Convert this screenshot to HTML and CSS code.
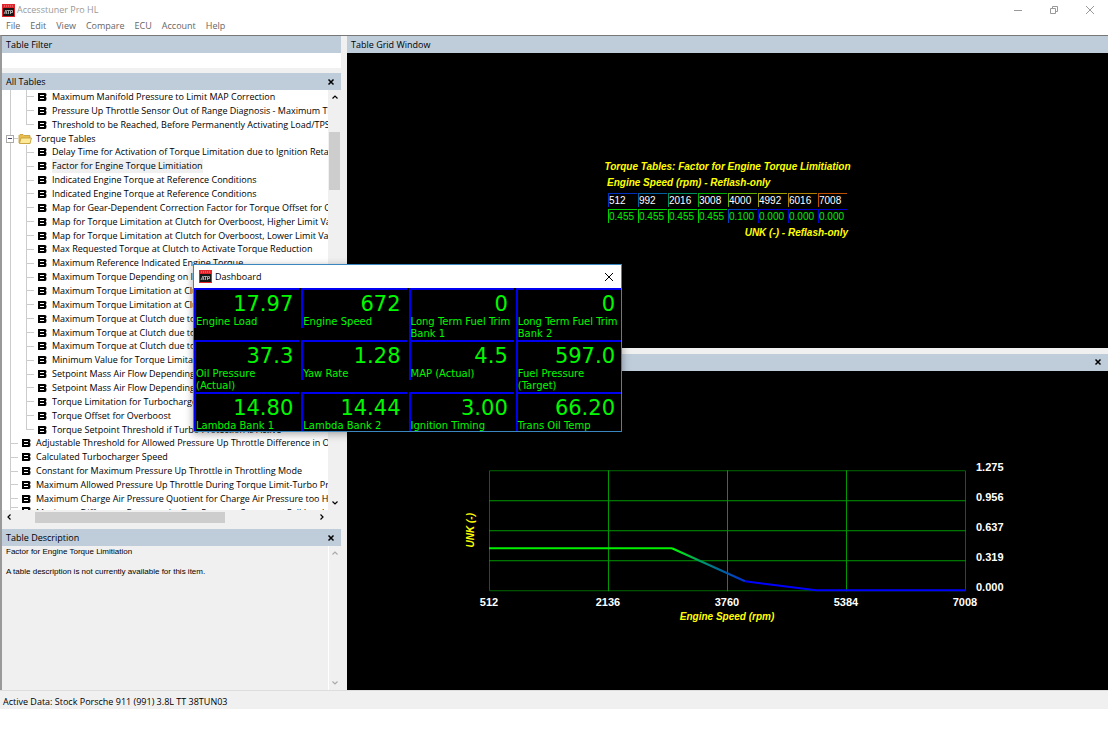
FILE: index.html
```html
<!DOCTYPE html>
<html lang="en">
<head>
  <meta charset="utf-8">
  <meta name="viewport" content="width=device-width, initial-scale=1.0">
  <title>Accesstuner Pro HL</title>
  <link rel="stylesheet" href="styles.css">
</head>
<body>
  <!-- shared icons -->
  <svg class="sprite" width="0" height="0">
    <symbol id="atp" viewBox="0 0 13 13">
      <rect width="13" height="13" fill="#e0262c"/>
      <rect x="1" y="4" width="11" height="8" fill="#161616"/>
      <path d="M2 2h1M4 2h1M6 2h1M8 2h1M10 2h1" stroke="#f28b8b"/>
      <path d="M2 10l2-4 1 4M3 9h2M5 6.500h3M6.500 6.500V10M8.500 10V6.500h2v2h-2" fill="none" stroke="#ccc" stroke-width=".8"/>
    </symbol>
    <symbol id="leaf" viewBox="0 0 10 10">
      <path d="M1 1h7q1.500 0 1.500 1.500 0 1.500-.8 2 .8.500.8 2Q9.500 9 8 9H1z" fill="#000"/>
      <path d="M3 3.500h4M3 6.500h4" stroke="#fff"/>
    </symbol>
    <symbol id="folder" viewBox="0 0 14 12">
      <path d="M1 10V2.500L2 1.500h3l1 1h6v8z" fill="#e9bd4d" stroke="#c29a35" stroke-width=".8"/>
      <path d="M1.500 10.500L3 5h10.500L12 10.500z" fill="#fde998" stroke="#c29a35" stroke-width=".8"/>
    </symbol>
    <symbol id="cross" viewBox="0 0 8 8">
      <path d="M1.500 1.500l5 5M6.500 1.500l-5 5" fill="none" stroke="currentColor" stroke-width="1.500"/>
    </symbol>
    <symbol id="thin-cross" viewBox="0 0 10 10">
      <path d="M1 1l8 8M9 1L1 9" fill="none" stroke="currentColor"/>
    </symbol>
    <symbol id="chevron" viewBox="0 0 8 8">
      <path d="M1.500 5.500L4 3l2.500 2.500" fill="none" stroke="currentColor" stroke-width="1.200"/>
    </symbol>
  </svg>

  <div class="app">
    <header class="titlebar">
      <svg class="logo"><use href="#atp"/></svg>
      <span class="title">Accesstuner Pro HL</span>
      <button class="win-btn" aria-label="Minimize"><svg viewBox="0 0 10 10"><path d="M1 5.500h8" stroke="currentColor"/></svg></button>
      <button class="win-btn" aria-label="Restore"><svg viewBox="0 0 10 10"><path d="M1.500 3.500h5v5h-5zM3.500 3V1.500h5v5H7" fill="none" stroke="currentColor"/></svg></button>
      <button class="win-btn" aria-label="Close"><svg><use href="#thin-cross"/></svg></button>
    </header>

    <nav class="menu">
      <button>File</button>
      <button>Edit</button>
      <button>View</button>
      <button>Compare</button>
      <button>ECU</button>
      <button>Account</button>
      <button>Help</button>
    </nav>

    <main class="workspace">
      <div class="sidebar">
        <section class="filter">
          <label class="panel-head" for="filter">Table Filter</label>
          <input class="filter-input" id="filter" type="text">
        </section>

        <section class="tables">
          <div class="panel-head">
            <span>All Tables</span>
            <button class="panel-close" aria-label="Close tables"><svg><use href="#cross"/></svg></button>
          </div>
          <div class="tree-box">
            <ul class="tree">
              <li class="child"><svg><use href="#leaf"/></svg><span>Maximum Manifold Pressure to Limit MAP Correction</span></li>
              <li class="child"><svg><use href="#leaf"/></svg><span>Pressure Up Throttle Sensor Out of Range Diagnosis - Maximum Threshold</span></li>
              <li class="child last"><svg><use href="#leaf"/></svg><span>Threshold to be Reached, Before Permanently Activating Load/TPS Plausibility</span></li>
              <li class="group"><button class="toggle" aria-label="Collapse Torque Tables"></button><svg class="folder"><use href="#folder"/></svg><span>Torque Tables</span></li>
              <li class="child"><svg><use href="#leaf"/></svg><span>Delay Time for Activation of Torque Limitation due to Ignition Retard</span></li>
              <li class="child selected"><svg><use href="#leaf"/></svg><span>Factor for Engine Torque Limitiation</span></li>
              <li class="child"><svg><use href="#leaf"/></svg><span>Indicated Engine Torque at Reference Conditions</span></li>
              <li class="child"><svg><use href="#leaf"/></svg><span>Indicated Engine Torque at Reference Conditions</span></li>
              <li class="child"><svg><use href="#leaf"/></svg><span>Map for Gear-Dependent Correction Factor for Torque Offset for Overboost</span></li>
              <li class="child"><svg><use href="#leaf"/></svg><span>Map for Torque Limitation at Clutch for Overboost, Higher Limit Value</span></li>
              <li class="child"><svg><use href="#leaf"/></svg><span>Map for Torque Limitation at Clutch for Overboost, Lower Limit Value</span></li>
              <li class="child"><svg><use href="#leaf"/></svg><span>Max Requested Torque at Clutch to Activate Torque Reduction</span></li>
              <li class="child"><svg><use href="#leaf"/></svg><span>Maximum Reference Indicated Engine Torque</span></li>
              <li class="child"><svg><use href="#leaf"/></svg><span>Maximum Torque Depending on Intake</span></li>
              <li class="child"><svg><use href="#leaf"/></svg><span>Maximum Torque Limitation at Clutch</span></li>
              <li class="child"><svg><use href="#leaf"/></svg><span>Maximum Torque Limitation at Clutch</span></li>
              <li class="child"><svg><use href="#leaf"/></svg><span>Maximum Torque at Clutch due to</span></li>
              <li class="child"><svg><use href="#leaf"/></svg><span>Maximum Torque at Clutch due to</span></li>
              <li class="child"><svg><use href="#leaf"/></svg><span>Maximum Torque at Clutch due to</span></li>
              <li class="child"><svg><use href="#leaf"/></svg><span>Minimum Value for Torque Limitation</span></li>
              <li class="child"><svg><use href="#leaf"/></svg><span>Setpoint Mass Air Flow Depending on</span></li>
              <li class="child"><svg><use href="#leaf"/></svg><span>Setpoint Mass Air Flow Depending on</span></li>
              <li class="child"><svg><use href="#leaf"/></svg><span>Torque Limitation for Turbocharger</span></li>
              <li class="child"><svg><use href="#leaf"/></svg><span>Torque Offset for Overboost</span></li>
              <li class="child last"><svg><use href="#leaf"/></svg><span>Torque Setpoint Threshold if Turbo Protection is Active</span></li>
              <li><svg><use href="#leaf"/></svg><span>Adjustable Threshold for Allowed Pressure Up Throttle Difference in Overboost</span></li>
              <li><svg><use href="#leaf"/></svg><span>Calculated Turbocharger Speed</span></li>
              <li><svg><use href="#leaf"/></svg><span>Constant for Maximum Pressure Up Throttle in Throttling Mode</span></li>
              <li><svg><use href="#leaf"/></svg><span>Maximum Allowed Pressure Up Throttle During Torque Limit-Turbo Protection</span></li>
              <li><svg><use href="#leaf"/></svg><span>Maximum Charge Air Pressure Quotient for Charge Air Pressure too High</span></li>
              <li class="cut"><svg><use href="#leaf"/></svg><span>Maximum Difference Between the Two Pressure Sensors at Full Load, MAP</span></li>
            </ul>
            <div class="vbar">
              <svg><use href="#chevron"/></svg>
              <div class="vthumb"></div>
              <svg class="down"><use href="#chevron"/></svg>
            </div>
          </div>
          <div class="hbar">
            <svg class="left"><use href="#chevron"/></svg>
            <div class="hthumb"></div>
            <svg class="right"><use href="#chevron"/></svg>
          </div>
        </section>

        <section class="description">
          <div class="panel-head">
            <span>Table Description</span>
            <button class="panel-close" aria-label="Close description"><svg><use href="#cross"/></svg></button>
          </div>
          <div class="description-box">
            <div class="description-text">
              <p>Factor for Engine Torque Limitiation</p>
              <p>A table description is not currently available for this item.</p>
            </div>
            <div class="vbar muted">
              <svg><use href="#chevron"/></svg>
              <svg class="down"><use href="#chevron"/></svg>
            </div>
          </div>
        </section>
      </div>

      <div class="content">
        <section class="grid-window">
          <div class="panel-head">Table Grid Window</div>
          <div class="grid-view">
            <h2>Torque Tables: Factor for Engine Torque Limitiation</h2>
            <div class="grid-body">
              <p class="axis-x">Engine Speed (rpm) - Reflash-only</p>
              <table class="cells">
                <tr>
                  <th class="c1">512</th><th class="c2">992</th><th class="c3">2016</th><th class="c4">3008</th><th class="c5">4000</th><th class="c6">4992</th><th class="c7">6016</th><th class="c8">7008</th>
                </tr>
                <tr>
                  <td class="high">0.455</td><td class="high">0.455</td><td class="high">0.455</td><td class="high">0.455</td><td class="low">0.100</td><td class="zero">0.000</td><td class="zero">0.000</td><td class="zero">0.000</td>
                </tr>
              </table>
              <p class="axis-z">UNK (-) - Reflash-only</p>
            </div>
          </div>
        </section>

        <section class="graph-window">
          <div class="panel-head">
            <span></span>
            <button class="panel-close" aria-label="Close graph"><svg><use href="#cross"/></svg></button>
          </div>
          <svg class="graph" viewBox="0 0 761 319">
            <defs>
              <linearGradient id="fall" gradientUnits="userSpaceOnUse" x1="325" y1="0" x2="398" y2="0">
                <stop offset="0" stop-color="#00ff00"/>
                <stop offset=".5" stop-color="#008080"/>
                <stop offset="1" stop-color="#0030d8"/>
              </linearGradient>
            </defs>
            <path class="frame" d="M142.500 99.500H618.500V219.500H142.500Z"/>
            <path class="lines" d="M261.500 99V220M380.500 99V220M499.500 99V220M142 129.500H619M142 159.500H619M142 189.500H619"/>
            <path class="curve" stroke="#00f000" d="M142 177H325"/>
            <path class="curve" stroke="url(#fall)" d="M325 177L398 210"/>
            <path class="curve" stroke="#0000ff" d="M398 210L469 219H619"/>
            <g class="ticks">
              <text x="142" y="235">512</text>
              <text x="261" y="235">2136</text>
              <text x="380" y="235">3760</text>
              <text x="499" y="235">5384</text>
              <text x="618" y="235">7008</text>
              <text x="629" y="100">1.275</text>
              <text x="629" y="130">0.956</text>
              <text x="629" y="160">0.637</text>
              <text x="629" y="190">0.319</text>
              <text x="629" y="220">0.000</text>
            </g>
            <text class="axis" x="380" y="249">Engine Speed (rpm)</text>
            <text class="axis" transform="translate(127 159) rotate(-90)">UNK (-)</text>
          </svg>
        </section>
      </div>
    </main>

    <footer class="status">Active Data: Stock Porsche 911 (991) 3.8L TT 38TUN03</footer>
  </div>

  <!-- floating gauge window -->
  <div class="dashboard">
    <div class="dash-head">
      <svg class="logo"><use href="#atp"/></svg>
      <span>Dashboard</span>
      <button class="dash-close" aria-label="Close dashboard"><svg><use href="#thin-cross"/></svg></button>
    </div>
    <div class="gauges">
      <div class="gauge"><b>17.97</b><span>Engine Load</span></div>
      <div class="gauge"><b>672</b><span>Engine Speed</span></div>
      <div class="gauge"><b>0</b><span>Long Term Fuel Trim Bank 1</span></div>
      <div class="gauge"><b>0</b><span>Long Term Fuel Trim Bank 2</span></div>
      <div class="gauge"><b>37.3</b><span>Oil Pressure<br>(Actual)</span></div>
      <div class="gauge"><b>1.28</b><span>Yaw Rate</span></div>
      <div class="gauge"><b>4.5</b><span>MAP (Actual)</span></div>
      <div class="gauge"><b>597.0</b><span>Fuel Pressure<br>(Target)</span></div>
      <div class="gauge"><b>14.80</b><span>Lambda Bank 1</span></div>
      <div class="gauge"><b>14.44</b><span>Lambda Bank 2</span></div>
      <div class="gauge"><b>3.00</b><span>Ignition Timing</span></div>
      <div class="gauge"><b>66.20</b><span>Trans Oil Temp</span></div>
    </div>
  </div>
</body>
</html>
```
FILE: styles.css
```css
* {
  box-sizing: border-box;
}

body {
  margin: 0;
  background: #fff;
  color: #000;
  font-family: "Open Sans", "Noto Sans", sans-serif;
  font-size: 9px;
  line-height: 14px;
}

button {
  padding: 0;
  border: none;
  background: none;
  color: inherit;
  font: inherit;
}

p, h2, ul {
  margin: 0;
  padding: 0;
}

svg {
  display: block;
  flex: none;
}

.sprite {
  position: absolute;
}

.app {
  display: flex;
  flex-direction: column;
  height: calc(100vh - 21px);
  margin-right: 2px;
}

.logo {
  width: 13px;
  height: 13px;
}

/* Title bar and menu */
.titlebar {
  display: flex;
  align-items: center;
  height: 20px;
  padding: 0 13px 0 2px;
  color: #999;
}

.title {
  flex: 1;
  padding-left: 2px;
}

.win-btn {
  margin-left: 26px;
}

.win-btn svg {
  width: 10px;
  height: 10px;
}

.menu {
  display: flex;
  align-items: flex-start;
  gap: 10px;
  height: 15px;
  padding: 0 6px;
  color: #666;
  line-height: 12px;
}

/* Main area */
.workspace {
  flex: 1;
  display: flex;
  gap: 6px;
  min-height: 0;
  border-top: 1px solid #777;
  border-left: 2px solid #999;
  background: #f0f0f0;
}

.sidebar {
  display: flex;
  flex-direction: column;
  gap: 5px;
  width: 339px;
}

.content {
  flex: 1;
  display: flex;
  flex-direction: column;
  gap: 6px;
  min-width: 0;
}

.panel-head {
  display: flex;
  flex: none;
  align-items: center;
  justify-content: space-between;
  height: 17px;
  padding: 0 6px 0 4px;
  background: #bfcddb;
}

.panel-close svg {
  width: 8px;
  height: 8px;
}

.filter-input {
  display: block;
  width: 100%;
  height: 15px;
  padding: 0 3px;
  border: none;
  font: inherit;
}

/* Table tree */
.tables {
  flex: 1;
  display: flex;
  flex-direction: column;
  min-height: 0;
}

.tree-box {
  flex: 1;
  display: flex;
  min-height: 0;
  background: #fff;
}

.tree {
  flex: 1;
  display: flex;
  flex-direction: column;
  min-width: 0;
  overflow: hidden;
  list-style: none;
  background: linear-gradient(#ccc, #ccc) 8px 0 / 1px 100% no-repeat;
}

.tree li {
  flex: 1 0 0;
  display: flex;
  align-items: center;
  gap: 5px;
  min-height: 0;
  padding-left: 19px;
  white-space: nowrap;
  background: linear-gradient(#ccc, #ccc) 8px 50% / 8px 1px no-repeat;
}

.tree li.child {
  padding-left: 35px;
  background:
    linear-gradient(#ccc, #ccc) 24px 0 / 1px 100% no-repeat,
    linear-gradient(#ccc, #ccc) 24px 50% / 8px 1px no-repeat;
}

.tree li.last {
  background:
    linear-gradient(#ccc, #ccc) 24px 0 / 1px 50% no-repeat,
    linear-gradient(#ccc, #ccc) 24px 50% / 8px 1px no-repeat;
}

.tree li.group {
  gap: 4px;
  padding-left: 4px;
}

.tree li.cut {
  flex: 0 0 4px;
  align-items: flex-start;
  overflow: hidden;
}

.tree svg {
  width: 10px;
  height: 10px;
}

.tree svg.folder {
  width: 14px;
  height: 12px;
}

.selected span {
  background: #f0f0f0;
}

.toggle {
  width: 8px;
  height: 8px;
  border: 1px solid #aaa;
  background: linear-gradient(#446, #446) 50% 50% / 4px 1px no-repeat #fff;
}

/* Scroll bars */
.vbar {
  display: flex;
  flex-direction: column;
  align-items: center;
  width: 13px;
  padding: 3px 0;
  background: #f0f0f0;
}

.vbar svg,
.hbar svg {
  width: 8px;
  height: 8px;
}

.vthumb {
  width: 11px;
  height: 58px;
  margin-top: 31px;
  background: #cdcdcd;
}

.down {
  margin-top: auto;
  transform: rotate(180deg);
}

.muted {
  border-left: 1px solid #fff;
  color: #aaa;
}

.hbar {
  display: flex;
  align-items: center;
  height: 14px;
  padding: 0 15px 0 3px;
}

.hthumb {
  width: 190px;
  height: 11px;
  margin-left: 22px;
  background: #cdcdcd;
}

.left {
  transform: rotate(-90deg);
}

.right {
  margin-left: auto;
  transform: rotate(90deg);
}

/* Description */
.description-box {
  display: flex;
  height: 144px;
}

.description-text {
  flex: 1;
  padding-left: 4px;
  font-family: "Liberation Sans", Arial, sans-serif;
  font-size: 8px;
  line-height: 12px;
}

.description-text p + p {
  margin-top: 8px;
}

/* Table grid */
.grid-window {
  flex: 312;
  display: flex;
  flex-direction: column;
}

.grid-view {
  flex: 1;
  display: flex;
  flex-direction: column;
  align-items: center;
  justify-content: center;
  background: #000;
  color: #ff0;
  font-family: "Liberation Sans", Arial, sans-serif;
  font-size: 10px;
  font-style: italic;
  font-weight: bold;
  line-height: 16px;
}

.grid-view h2 {
  font-size: 10px;
}

.axis-z {
  text-align: right;
}

.cells {
  border-spacing: 1px 2px;
  font-style: normal;
}

.cells th,
.cells td {
  width: 29px;
  height: 14px;
  padding: 0;
  border-style: solid;
  border-width: 1px 0 0 1px;
  font-weight: normal;
  line-height: 13px;
  text-align: left;
}

.cells th {
  color: #fff;
}

.cells td {
  color: #00f000;
}

.cells .c1 { border-color: #0030c0; }
.cells .c2 { border-color: #0060a0; }
.cells .c3 { border-color: #009060; }
.cells .c4 { border-color: #00b000; }
.cells .c5 { border-color: #60b000; }
.cells .c6 { border-color: #a0a000; }
.cells .c7 { border-color: #b08000; }
.cells .c8 { border-color: #c05000; }
.cells .high { border-color: #00d000; }
.cells .low { border-color: #0040c0; }
.cells .zero { border-color: #0000d0; }

/* Graph */
.graph-window {
  flex: 337;
  display: flex;
  flex-direction: column;
  min-height: 0;
}

.graph {
  flex: 1;
  width: 100%;
  min-height: 0;
  background: #000;
  font-family: "Liberation Sans", Arial, sans-serif;
  font-size: 11px;
}

.graph path {
  fill: none;
}

.frame {
  stroke: #006800;
}

.lines {
  stroke: #009800;
}

.graph .curve {
  stroke-width: 2;
}

.ticks {
  fill: #fff;
  font-weight: bold;
}

.ticks text:nth-child(-n+5),
.axis {
  text-anchor: middle;
}

.axis {
  fill: #ff0;
  font-size: 10px;
  font-style: italic;
  font-weight: bold;
}

.status {
  height: 19px;
  padding: 4px 3px 0;
  border-top: 1px solid #ddd;
  background: #f0f0f0;
}

/* Dashboard */
.dashboard {
  position: absolute;
  top: 264px;
  left: 193px;
  width: 429px;
  border: 1px solid #3a87c0;
  background: #000;
  box-shadow: 0 2px 8px rgba(0, 0, 0, 0.35);
}

.dash-head {
  display: flex;
  align-items: center;
  gap: 3px;
  height: 23px;
  padding: 0 7px 0 5px;
  background: #fff;
}

.dash-close {
  margin-left: auto;
}

.dash-close svg {
  width: 10px;
  height: 10px;
}

.gauges {
  display: grid;
  grid-template-columns: repeat(4, 1fr);
  grid-template-rows: 52px 52px 39px;
  column-gap: 2px;
  align-items: start;
  overflow: hidden;
}

.gauge {
  padding-top: 2px;
  border-top: 2px solid #0000f0;
  border-left: 2px solid #0000f0;
  color: #00f800;
  font-family: "DejaVu Sans", Verdana, sans-serif;
  font-size: 10px;
  line-height: 12px;
}

.gauge b {
  display: block;
  padding-right: 6px;
  font-size: 21px;
  font-weight: normal;
  line-height: 24px;
  text-align: right;
}

.gauge span {
  display: block;
}
```
